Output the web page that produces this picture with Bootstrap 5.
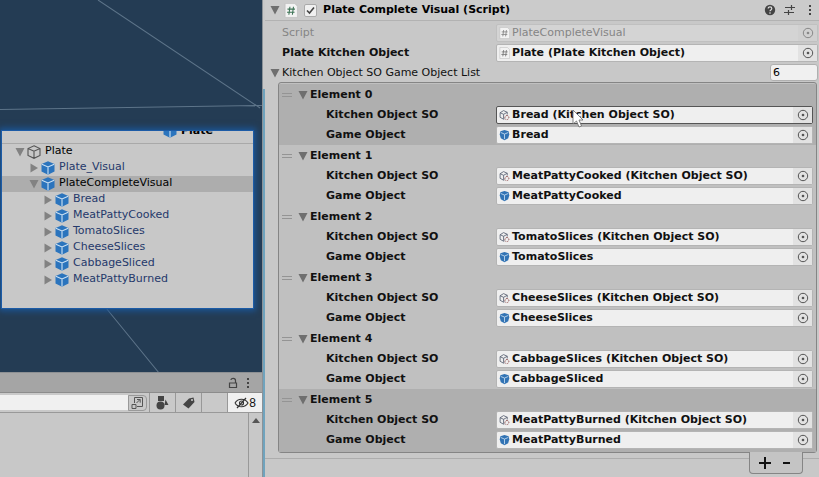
<!DOCTYPE html>
<html lang="en">
<head>
<meta charset="utf-8">
<meta name="viewport" content="width=device-width, initial-scale=1">
<title>Plate Complete Visual</title>
<link href="https://cdn.jsdelivr.net/npm/bootstrap@5.3.0/dist/css/bootstrap.min.css" rel="stylesheet">
<style>
body{font:11px/16px "DejaVu Sans",Verdana,sans-serif;color:#111;background:#c8c8c8;overflow:hidden}
svg{display:block;flex:none}
button{border:0;background:none;padding:0;color:inherit;font:inherit;display:flex;align-items:center;justify-content:center;flex:none}
.left-side{width:32%;background:#243c54}
.scene{background:#243c54}
.scene-lines{inset:0;width:100%;height:100%}
.prefab{margin:131px 9px 0 2px;height:177px;background:#c8c8c8;box-shadow:0 0 0 1px #1c5ba6,0 0 6px 3px #1b5597}
.prefab-title{height:13px;border-bottom:1px solid #a9a9a9;color:#000}
.prefab-title>div{margin-top:-8px;padding-left:161px}
.tree-row{height:16px;color:#25396b}
.tree-row button{width:14px;height:18px;color:#828282}
.tree-row span{padding-bottom:2px}
.tree-row.root-row,.tree-row.chosen{color:#000}
.chosen{background:#adadad}
.d0{padding-left:11px}.d1{padding-left:25px}.d2{padding-left:39px}
.project{height:105px;background:#c8c8c8}
.project-tabs{height:20px;background:#a5a5a5;border-top:1px solid #8d9093;color:#444}
.toolbar{height:21px;border-top:1px solid #8c8c8c;border-bottom:1px solid #999;background:#c9c9c9}
.toolbar input{min-width:0;border:0;background:#f0f0f0;height:15px;border-radius:0}
.toolbar .tool{width:26px;height:19px;border-left:1px solid #989898;color:#444}
.toolbar .expand{width:19px;height:16px;border:1px solid #999;border-radius:0 4px 4px 0;margin-right:2px;color:#555}
.toolbar .hidden-count{width:35px;background:#f0f0f0;font:12px "Liberation Sans",sans-serif;color:#111}
.scroll{width:14px;border-left:1px solid #999;color:#555}
.inspector{background:#c8c8c8;min-width:0;border-left:1px solid #8b9298}
.edge{width:2px;margin-top:89px;background:#6fa3bd}
.comp-head{height:21px;border-bottom:1px solid #b2b2b2;background:#cbcbcb;color:#444;padding:0 3px 0 2px}
.comp-head b{color:#000}
.comp-head .hash{margin-left:2px}
.fold{width:15px;height:16px;color:#6f6f6f}
.tick{appearance:none;width:13px;height:13px;border:1px solid #aaa;border-radius:2px;background:#f0f0f0 url("data:image/svg+xml,%3Csvg xmlns='http://www.w3.org/2000/svg' viewBox='0 0 11 11'%3E%3Cpath d='M2 5.5 4.5 8 9 2.5' fill='none' stroke='%23444' stroke-width='1.6'/%3E%3C/svg%3E");margin:0 6px}
.props{padding:2px 1px 0 0}
.prop{height:20px;padding-left:17px}
.prop>.name{width:214px;flex:none}
.prop.list-head{padding-left:2px;height:19px}
.obj{height:18px;background:#efefef;border:1px solid #b4b4b4;border-radius:2px;padding-left:2px;min-width:0;gap:2px}
.obj button{width:19px;align-self:stretch;background:#e2e2e2;color:#555}
.obj.hot{border-color:#555}
.dim{color:#858585}
.dim .obj{background:#d4d4d4;border-color:#c0c0c0}
.dim button{background:#d0d0d0;color:#888}
.size-box{width:48px;height:17px;border:1px solid #b0b0b0;border-radius:3px;background:#f0f0f0;padding:0 2px;font-size:11px}
.items{margin:0 2px 0 13px;border:1px solid #858585;border-radius:3px;background:#c0c0c0;padding:1px 0 2px}
.item{height:61px;padding-right:3px}
.item .head{height:21px;padding-left:3px}
.item .prop{padding-left:47px}
.item .prop>.name{width:170px}
.picked{background:#afafaf}
.items .picked:last-child{height:63px;margin-bottom:-2px}
.grip{width:10px;height:4px;border:solid #949494;border-width:1px 0;margin-right:3px}
.comp-end{height:6px;border-bottom:1px solid #adadad}
.list-foot{width:54px;height:22px;margin:-7px 16px 0 0;border:1px solid #858585;border-top:0;border-radius:0 0 4px 4px;background:#c4c4c4;position:relative}
.cursor{position:absolute;left:572px;top:109px}
</style>
<script src="https://cdn.jsdelivr.net/npm/bootstrap@5.3.0/dist/js/bootstrap.bundle.min.js"></script>
</head>
<body>
<svg width="0" height="0" class="position-absolute">
<symbol id="down" viewBox="0 0 10 10"><path d="M.5 1h9L5 9.500z" fill="currentColor"/></symbol>
<symbol id="right" viewBox="0 0 10 10"><path d="M1.500 .5v9L9 5z" fill="currentColor"/></symbol>
<symbol id="cube" viewBox="0 0 14 14"><path d="M7 .3 13.500 3v7.600L7 13.800.5 10.600V3z" fill="#2b74bd"/><path d="M.8 3.300 7 6l6.200-2.700M7 6v7.500" fill="none" stroke="#cfe3f4" stroke-width="1.100"/></symbol>
<symbol id="ball" viewBox="0 0 12 12"><path d="M6 .5 10.500 2l.7 3.500L10 9.500 6 11.600 2 9.500.8 5.500 1.500 2z" fill="#3173b4"/><path d="M2 3.300 6 5l4-1.700M6 5v5.500" fill="none" stroke="#bcd5ec"/></symbol>
<symbol id="wire" viewBox="0 0 14 14"><path d="M7 .8 13 3.500v7L7 13.300 1 10.500v-7zM1 3.500l6 2.700 6-2.700M7 6.200v7" fill="none" stroke="#555" stroke-width="1.100"/></symbol>
<symbol id="so" viewBox="0 0 12 12"><path d="M5 1.200 9 3v2.500M6 10.200 5 10.600 1.200 8.500V3.500L5 1.200M1.200 3.500 5 5.200 9 3M5 5.200v5" fill="none" stroke="#555e70" stroke-width=".9"/><path d="M8.500 6.500c3 0 3 4.500 0 4.500s-2.500-4 0-4.500" fill="none" stroke="#844" stroke-dasharray="1.500 1"/></symbol>
<symbol id="pick" viewBox="0 0 12 12"><circle cx="6" cy="6" r="4.700" fill="none" stroke="currentColor"/><circle cx="6" cy="6" r="1.300" fill="currentColor"/></symbol>
<symbol id="hash" viewBox="0 0 13 14"><path d="M1 .5h9l2.500 2.500v10.500H1z" fill="#f3f3f3" stroke="#bbb" stroke-width=".6"/><path d="M5.500 3.500 4.500 11M8.800 3.500l-1 7.500M3.200 5.700h7M2.800 8.700h7" fill="none" stroke="currentColor"/></symbol>
<symbol id="dots" viewBox="0 0 4 12"><path d="M1 1h2v2H1zM1 5h2v2H1zM1 9h2v2H1z" fill="currentColor"/></symbol>
</svg>
<div class="d-flex vh-100">
<aside class="left-side d-flex flex-column">
 <section class="scene flex-grow-1 position-relative overflow-hidden">
  <svg class="scene-lines position-absolute" viewBox="0 0 262 372" preserveAspectRatio="none"><path d="M98 0 260 108M0 109.500 262 105.500M106 308l53 65" fill="none" stroke="#5d7489"/></svg>
  <div class="prefab position-relative">
   <div class="prefab-title overflow-hidden"><div class="d-flex align-items-center gap-1"><svg width="14" height="14"><use href="#cube"/></svg><b>Plate</b></div></div>
   <div id="tree"></div>
  </div>
 </section>
 <section class="project d-flex flex-column flex-shrink-0">
  <div class="project-tabs d-flex align-items-center justify-content-end gap-1 pe-2">
   <button aria-label="Lock"><svg width="10" height="12" viewBox="0 0 10 12"><path d="M1.500 6h7v4.500h-7zM7.500 6V3.500C7.500.7 3 .7 3 3" fill="none" stroke="currentColor" stroke-width="1.200"/></svg></button>
   <button aria-label="Menu" class="px-1"><svg width="4" height="12"><use href="#dots"/></svg></button>
  </div>
  <div class="toolbar d-flex align-items-center">
   <input type="text" class="flex-grow-1" aria-label="Search">
   <button class="expand" aria-label="Open search"><svg width="13" height="13" viewBox="0 0 13 13" fill="none" stroke="currentColor"><path d="M3.500 7V1.500h8v9H6M1 8.500h4v4H1zM5.500 7 9 3.500M6 3.500h3.200v3.200"/></svg></button>
   <button class="tool" aria-label="Filter by type"><svg width="13" height="14" viewBox="0 0 13 14" fill="currentColor"><path d="M2 0h6v5H2zM9.500 3.500 12.500 9h-4z"/><circle cx="4.500" cy="9.500" r="4"/></svg></button>
   <button class="tool" aria-label="Filter by label"><svg width="12" height="12" viewBox="0 0 12 12"><path d="M6 1.500 10.500.5 11.500 5 5.500 11.500 0 7.500z" fill="currentColor"/><circle cx="9" cy="3" r="1" fill="#ccc"/></svg></button>
   <button class="tool" aria-label="Save search"></button>
   <button class="tool hidden-count" aria-label="Hidden packages"><svg width="15" height="12" viewBox="0 0 15 12" fill="none" stroke="#333" stroke-width="1.200"><path d="M1 6c3-5 10-5 13 0-3 5-10 5-13 0M3 11 12 1"/><circle cx="7.500" cy="6" r="2"/></svg>8</button>
  </div>
  <div class="d-flex flex-grow-1 justify-content-end"><div class="scroll d-flex justify-content-center pt-1"><svg width="8" height="7" viewBox="0 0 8 7"><path d="M4 1 8 6H0z" fill="currentColor"/></svg></div></div>
 </section>
</aside>
<main class="inspector flex-grow-1 d-flex">
 <div class="edge"></div>
 <div class="flex-grow-1">
  <header class="comp-head d-flex align-items-center">
   <button class="fold" aria-label="Fold component"><svg width="10" height="10"><use href="#down"/></svg></button>
   <svg width="14" height="15" class="hash" color="#3c7355"><use href="#hash"/></svg>
   <input id="on" type="checkbox" class="tick" checked><label for="on" class="flex-grow-1"><b>Plate Complete Visual (Script)</b></label>
   <button aria-label="Help" class="me-2"><svg width="12" height="12" viewBox="0 0 12 12"><circle cx="6" cy="6" r="5.200" fill="#444"/><path d="M4.200 4.600c0-2.300 3.600-2.300 3.600 0C7.800 6 6 5.800 6 7.200M6 8.300v1.400" fill="none" stroke="#ddd" stroke-width="1.200"/></svg></button>
   <button aria-label="Presets" class="me-2"><svg width="12" height="12" viewBox="0 0 12 12"><path d="M1 3.500h6M7 3.500h4M7.500 1v5M0 8.500h4M5 8.500h5M4.500 6v5" fill="none" stroke="currentColor" stroke-width="1.200"/></svg></button>
   <button aria-label="More" class="px-1"><svg width="4" height="12"><use href="#dots"/></svg></button>
  </header>
  <div class="props">
  <div class="prop dim d-flex align-items-center"><span class="name">Script</span><div class="obj flex-grow-1 d-flex align-items-center"><svg width="11" height="12"><use href="#hash"/></svg><span class="flex-grow-1">PlateCompleteVisual</span><button aria-label="Pick script"><svg width="12" height="12"><use href="#pick"/></svg></button></div></div>
  <div class="prop d-flex align-items-center fw-bold"><span class="name">Plate Kitchen Object</span><div class="obj flex-grow-1 d-flex align-items-center"><svg width="11" height="12" color="#777"><use href="#hash"/></svg><span class="flex-grow-1">Plate (Plate Kitchen Object)</span><button aria-label="Pick object"><svg width="12" height="12"><use href="#pick"/></svg></button></div></div>
  <div class="prop list-head d-flex align-items-center"><button class="fold" aria-label="Fold list"><svg width="10" height="10"><use href="#down"/></svg></button><label for="size" class="flex-grow-1">Kitchen Object SO Game Object List</label><input id="size" class="size-box" type="text" value="6"></div>
  </div>
  <div class="items fw-bold" id="items"></div>
  <div class="comp-end"></div>
  <div class="d-flex justify-content-end"><div class="list-foot d-flex align-items-center justify-content-center gap-2"><button aria-label="Add"><svg width="14" height="14" viewBox="0 0 14 14"><path d="M7 1v12M1 7h12" stroke="#111" stroke-width="2"/></svg></button><button aria-label="Remove"><svg width="14" height="14" viewBox="0 0 14 14"><path d="M3 7h7" stroke="#111" stroke-width="2"/></svg></button></div></div>
 </div>
</main>
</div>
<svg class="cursor" width="13" height="20" viewBox="0 0 13 20"><path d="M1 1v14l3.500-3 2.500 6 2.500-1-2.500-6H11z" fill="#fff" stroke="#666" stroke-width=".8"/></svg>
<script>
const tree=[["Plate",0,"down","wire","root-row"],["Plate_Visual",1,"right","cube",""],["PlateCompleteVisual",1,"down","cube","chosen"],...["Bread","MeatPattyCooked","TomatoSlices","CheeseSlices","CabbageSliced","MeatPattyBurned"].map(n=>[n,2,"right","cube",""])];
document.getElementById("tree").innerHTML=tree.map(([n,d,a,i,c])=>`<div class="tree-row ${c} d${d} d-flex align-items-center"><button aria-label="Toggle ${n}"><svg width="10" height="10"><use href="#${a}"/></svg></button><svg width="14" height="14" class="me-1"><use href="#${i}"/></svg><span>${n}</span></div>`).join("");
const rows=[["Bread","Bread"],["MeatPattyCooked","MeatPattyCooked"],["TomatoSlices","TomatoSlices"],["CheeseSlices","CheeseSlices"],["CabbageSlices","CabbageSliced"],["MeatPattyBurned","MeatPattyBurned"]];
const field=(name,icon,text,hot)=>`<div class="prop d-flex align-items-center"><span class="name">${name}</span><div class="obj ${hot?"hot":""} flex-grow-1 d-flex align-items-center"><svg width="11" height="12"><use href="#${icon}"/></svg><span class="flex-grow-1">${text}</span><button aria-label="Pick ${text}"><svg width="12" height="12"><use href="#pick"/></svg></button></div></div>`;
document.getElementById("items").innerHTML=rows.map(([a,b],i)=>`<div class="item ${i==0||i==5?"picked":""}"><div class="head d-flex align-items-center"><span class="grip"></span><button class="fold" aria-label="Fold element"><svg width="10" height="10"><use href="#down"/></svg></button><span>Element ${i}</span></div>${field("Kitchen Object SO","so",a+" (Kitchen Object SO)",i==0)}${field("Game Object","ball",b,false)}</div>`).join("");
</script>
</body>
</html>
